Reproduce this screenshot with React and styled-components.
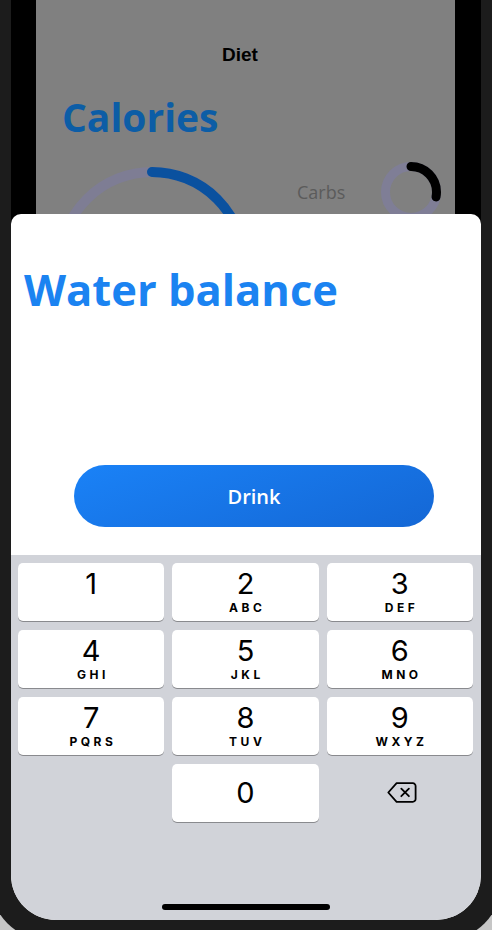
import React from "react";
import styled, { createGlobalStyle } from "styled-components";

const GlobalStyle = createGlobalStyle`
  html, body {
    margin: 0;
    padding: 0;
    background: #c6c6c6;
    overflow: hidden;
  }
  * {
    box-sizing: border-box;
  }
`;

const keys = [
  { digit: "1", letters: "" },
  { digit: "2", letters: "ABC" },
  { digit: "3", letters: "DEF" },
  { digit: "4", letters: "GHI" },
  { digit: "5", letters: "JKL" },
  { digit: "6", letters: "MNO" },
  { digit: "7", letters: "PQRS" },
  { digit: "8", letters: "TUV" },
  { digit: "9", letters: "WXYZ" }
];

const Ring = ({ size, stroke, progress, track, color }) => {
  const r = (size - stroke) / 2;
  const c = 2 * Math.PI * r;
  return (
    <svg width={size} height={size} viewBox={`0 0 ${size} ${size}`}>
      <circle cx={size / 2} cy={size / 2} r={r} fill="none" stroke={track} strokeWidth={stroke} />
      <circle
        cx={size / 2}
        cy={size / 2}
        r={r}
        fill="none"
        stroke={color}
        strokeWidth={stroke}
        strokeLinecap="round"
        strokeDasharray={`${c * progress} ${c}`}
        transform={`rotate(-90 ${size / 2} ${size / 2})`}
      />
    </svg>
  );
};

const BackspaceIcon = () => (
  <svg width="30" height="21" viewBox="0 0 30 21" fill="none" stroke="#000" strokeWidth="1.8" strokeLinecap="round" strokeLinejoin="round">
    <path d="M9.6 1.2 H25.8 a2.8 2.8 0 0 1 2.8 2.8 V17 a2.8 2.8 0 0 1 -2.8 2.8 H9.6 L1.3 10.5 Z" />
    <path d="M14.3 6.6 L21.9 14.2 M21.9 6.6 L14.3 14.2" />
  </svg>
);

function App() {
  return (
    <>
      <GlobalStyle />
      <Device>
        <Screen>
          <BackCard>
            <NavTitle>Diet</NavTitle>
            <DimHeading>Calories</DimHeading>
            <StatsRow>
              <Ring size={194} stroke={10} progress={0.4} track="#7e7d94" color="#0a519f" />
              <MacroGroup>
                <MacroLabel>Carbs</MacroLabel>
                <Ring size={60} stroke={9} progress={0.28} track="#7f7e96" color="#000" />
              </MacroGroup>
            </StatsRow>
          </BackCard>
          <Sheet>
            <SheetBody>
              <SheetTitle>Water balance</SheetTitle>
              <DrinkButton>Drink</DrinkButton>
            </SheetBody>
            <Keypad>
              <KeyGrid>
                {keys.map(k => (
                  <Key key={k.digit}>
                    <Digit>{k.digit}</Digit>
                    <Letters>{k.letters}</Letters>
                  </Key>
                ))}
                <EmptyCell />
                <Key centered>
                  <Digit>0</Digit>
                </Key>
                <DeleteKey>
                  <BackspaceIcon />
                </DeleteKey>
              </KeyGrid>
              <HomeIndicator />
            </Keypad>
          </Sheet>
        </Screen>
      </Device>
    </>
  );
}

export default App;

const Device = styled.div`
  width: 512px;
  height: 941px;
  margin-left: -10px;
  padding: 0 21px 21px;
  background: #1c1c1c;
  border-radius: 0 0 60px 60px;
`;

const Screen = styled.div`
  height: 920px;
  display: flex;
  flex-direction: column;
  background: #000;
  border-radius: 0 0 45px 45px;
  overflow: hidden;
`;

const BackCard = styled.div`
  flex-shrink: 0;
  height: 214px;
  margin: 0 26px 0 25px;
  background: #808080;
  overflow: hidden;
`;

const NavTitle = styled.div`
  padding: 44px 11px 0 0;
  height: 66px;
  text-align: center;
  font-family: "Liberation Sans", Arial, sans-serif;
  font-weight: 700;
  font-size: 19px;
  line-height: 22px;
  color: #000;
`;

const DimHeading = styled.h1`
  margin: 27px 0 0;
  padding-left: 26px;
  font-family: "Open Sans", sans-serif;
  font-weight: 700;
  font-size: 39px;
  line-height: 48px;
  color: #0c5da6;
`;

const StatsRow = styled.div`
  display: flex;
  align-items: flex-start;
  padding-left: 19px;

  & > svg {
    flex-shrink: 0;
    margin-top: 26px;
  }
`;

const MacroGroup = styled.div`
  display: flex;
  align-items: center;
  gap: 36px;
  margin: 21px 0 0 48px;
`;

const MacroLabel = styled.span`
  font-family: "Open Sans", sans-serif;
  font-size: 18px;
  color: #5b5b5b;
`;

const Sheet = styled.div`
  flex: 1;
  display: flex;
  flex-direction: column;
  background: #fff;
  border-radius: 10px 10px 0 0;
  overflow: hidden;
`;

const SheetBody = styled.div`
  height: 341px;
  display: flex;
  flex-direction: column;
  padding: 50px 0 28px 13px;
`;

const SheetTitle = styled.h2`
  margin: 0;
  font-family: "Open Sans", sans-serif;
  font-weight: 700;
  font-size: 43.5px;
  line-height: 52px;
  color: #1b83f1;
`;

const DrinkButton = styled.button`
  margin: auto 0 0 50px;
  width: 360px;
  height: 62px;
  border: none;
  border-radius: 31px;
  background: linear-gradient(160deg, #1a82f7 0%, #1467d5 100%);
  color: #fff;
  font-family: "Open Sans", sans-serif;
  font-weight: 600;
  font-size: 20px;
`;

const Keypad = styled.div`
  flex: 1;
  display: flex;
  flex-direction: column;
  padding: 8px 8px 0 7px;
  background: #d1d3d9;
`;

const KeyGrid = styled.div`
  display: grid;
  grid-template-columns: repeat(3, 1fr);
  grid-auto-rows: 57.5px;
  gap: 9.5px 8px;
`;

const Key = styled.div`
  display: flex;
  flex-direction: column;
  align-items: center;
  justify-content: ${props => (props.centered ? "center" : "flex-start")};
  padding-top: ${props => (props.centered ? "0" : "5.5px")};
  background: #fff;
  border-radius: 5px;
  box-shadow: 0 1px 0 #898a8e;
`;

const Digit = styled.span`
  font-family: Inter, "Liberation Sans", sans-serif;
  font-size: 29px;
  line-height: 30px;
  color: #000;
`;

const Letters = styled.span`
  margin-top: 2px;
  padding-left: 3.5px;
  font-family: Inter, "Liberation Sans", sans-serif;
  font-weight: 700;
  font-size: 12px;
  line-height: 14px;
  letter-spacing: 3.5px;
  color: #000;
`;

const EmptyCell = styled.div``;

const DeleteKey = styled.div`
  display: flex;
  align-items: center;
  justify-content: center;
  padding-left: 4px;
`;

const HomeIndicator = styled.div`
  margin: auto auto 10px;
  width: 168px;
  height: 6px;
  border-radius: 3px;
  background: #000;
`;
